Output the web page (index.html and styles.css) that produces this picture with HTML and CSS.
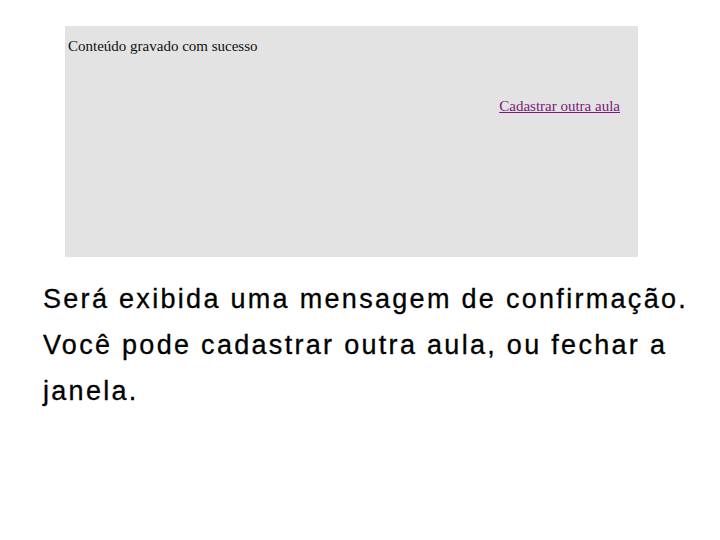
FILE: index.html
```html
<!DOCTYPE html>
<html lang="pt">
<head>
<meta charset="utf-8">
<link rel="stylesheet" href="styles.css">
</head>
<body>
<div class="page">
  <div class="shot">
    <p class="msg">Conteúdo gravado com sucesso</p>
    <div class="linkrow"><a class="link" href="#">Cadastrar outra aula</a></div>
  </div>
  <div class="caption">
    <span class="line">Será exibida uma mensagem de confirmação.</span>
    <span class="line">Você pode cadastrar outra aula, ou fechar a</span>
    <span class="line">janela.</span>
  </div>
</div>
</body>
</html>
```

FILE: styles.css
```css
html, body { margin: 0; padding: 0; background: #ffffff; }
.page { padding-top: 26px; }
.shot {
  margin-left: 65px;
  width: 573px;
  height: 231px;
  background: #e3e3e3;
  box-sizing: border-box;
  padding: 11px 18px 0 3px;
  font-family: "Liberation Serif", serif;
  font-size: 15px;
  color: #111;
}
.msg { margin: 0; line-height: 18px; }
.linkrow { display: flex; justify-content: flex-end; margin-top: 42px; }
.link { color: #7a1a7a; text-decoration: underline; line-height: 18px; }
.caption {
  margin: 19px 0 0 43px;
  font-family: "Liberation Sans", Arial, sans-serif;
  font-size: 27px;
  letter-spacing: 2.3px;
  line-height: 46px;
  color: #000;
  -webkit-text-stroke: 0.3px #000;
}
.line { display: block; white-space: nowrap; }
```
